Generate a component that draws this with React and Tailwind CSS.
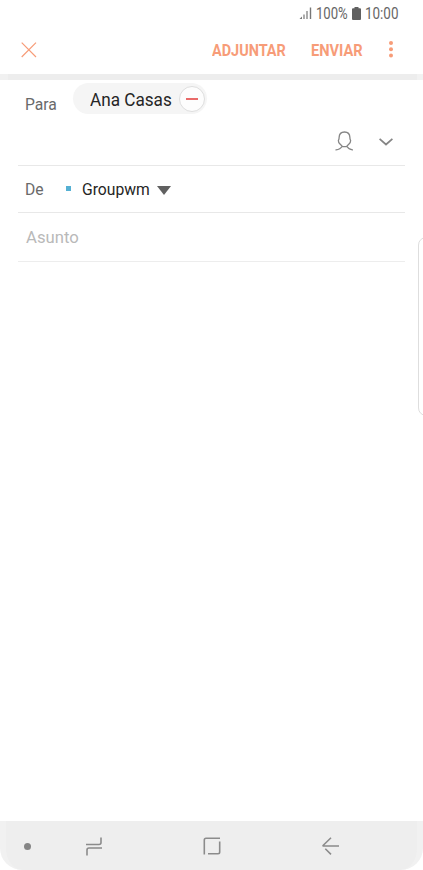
function StatusBar() {
  return (
    <div className="flex h-7 shrink-0 items-center pl-[299px] text-[#666]">
      <svg width="13" height="12" viewBox="0 0 13 12" className="mt-[-2px] shrink-0" fill="#777">
        <path d="M0.500 12 L3 9.500 V12Z" />
        <rect x="4.400" y="7.500" width="1.200" height="4.500" />
        <rect x="7.400" y="4" width="1.200" height="8" />
        <rect x="10.800" y="0.500" width="1.400" height="11.500" />
      </svg>
      <span className="ml-[4px] w-8 shrink-0 whitespace-nowrap text-base leading-7">
        <span className="inline-block origin-left scale-x-[0.82]">100%</span>
      </span>
      <svg width="9" height="13" viewBox="0 0 9 13" className="ml-[4px] mt-[-2px] shrink-0" fill="#606060">
        <path d="M2.500 0h4v1.200H8q1 0 1 1V12q0 1-1 1H1q-1 0-1-1V2.200q0-1 1-1h1.500z" />
      </svg>
      <span className="ml-[4px] whitespace-nowrap text-base leading-7">
        <span className="inline-block origin-left scale-x-[0.84]">10:00</span>
      </span>
    </div>
  );
}

function Toolbar() {
  return (
    <div className="flex h-[46px] shrink-0 items-center pl-[21px] text-[#f79c78]">
      <svg width="16" height="16" viewBox="0 0 16 16" className="mt-[-3px] shrink-0" fill="none" stroke="currentColor" strokeWidth="1.200">
        <path d="M0.700 0.700 15 15M15 0.700 0.700 15" />
      </svg>
      <button className="ml-[175px] mt-[1px] w-[99px] shrink-0 whitespace-nowrap text-left text-[16.500px] font-bold">
        <span className="inline-block origin-left scale-x-[0.875]">ADJUNTAR</span>
      </button>
      <button className="mt-[1px] w-[77px] shrink-0 whitespace-nowrap text-left text-[16.500px] font-bold">
        <span className="inline-block origin-left scale-x-[0.885]">ENVIAR</span>
      </button>
      <svg width="6" height="18" viewBox="0 0 6 18" className="mt-[-4px] shrink-0" fill="currentColor">
        <circle cx="3" cy="3" r="2" />
        <circle cx="3" cy="9.200" r="2" />
        <circle cx="3" cy="15.500" r="2" />
      </svg>
    </div>
  );
}

function Recipients() {
  return (
    <div className="mx-[18px] h-[86px] shrink-0 border-b border-[#e8e8e8]">
      <div className="flex pt-[3px]">
        <span className="ml-[7px] mt-[10px] w-12 shrink-0 text-[15.700px] leading-6 text-[#6a6a6a]">Para</span>
        <div className="flex h-[31px] w-[134px] items-center rounded-full bg-[#f5f5f5] pl-[17px]">
          <span className="mt-[3px] w-[89px] shrink-0 whitespace-nowrap text-[17.500px] leading-[31px] text-[#252525]">
            <span className="inline-block origin-left scale-x-[0.98]">Ana Casas</span>
          </span>
          <span className="flex size-[26px] shrink-0 items-center justify-center rounded-full border border-[#dedede] bg-[#fdfdfd]">
            <span className="h-0.5 w-3 bg-[#e96a69]" />
          </span>
        </div>
      </div>
      <div className="flex items-center pl-[317px] pt-[14px]">
        <svg width="18" height="20" viewBox="0 0 18 20" className="shrink-0" fill="none" stroke="#858585" strokeWidth="1.300" strokeLinecap="round">
          <path d="M9.500 1C6 1 4.200 3.300 4.100 6.500Q4.200 7.800 3.400 9.500Q3.300 11.500 5 13L7.200 15.300Q9.500 16 11.800 15.300L14 13Q15.700 11.500 15.600 9.500Q14.800 7.800 14.900 6.500C14.800 3.300 13 1 9.500 1M1 18.900Q5.300 18.600 7.200 15.300M17.500 18.900Q13.700 18.600 11.800 15.300" />
        </svg>
        <svg width="14" height="8" viewBox="0 0 14 8" className="ml-[25.500px] mt-[1px] shrink-0" fill="none" stroke="#858585" strokeWidth="1.700">
          <path d="M0.600 0.800 7 6.500 13.400 0.800" />
        </svg>
      </div>
    </div>
  );
}

export default function App() {
  return (
    <div className="relative flex h-[870px] w-[423px] flex-col overflow-hidden bg-white font-['Roboto',sans-serif]">
      <StatusBar />
      <Toolbar />
      <div className="flex h-1.5 shrink-0 bg-[#ededed]">
        <div className="w-2 bg-[#f1f1f1]" />
        <div className="ml-auto w-1.5 bg-[#f2f2f2]" />
      </div>
      <Recipients />
      <div className="mx-[18px] flex h-[47px] shrink-0 items-center border-b border-[#e8e8e8] pl-[7px]">
        <span className="mt-[2px] w-[41px] text-[15.700px] text-[#6a6a6a]">De</span>
        <span className="mt-[-1px] size-[5px] bg-[#55b0d3]" />
        <span className="ml-[11px] mt-[2px] w-[75px] whitespace-nowrap text-[15.700px] text-[#252525]">Groupwm</span>
        <svg width="14" height="9" viewBox="0 0 14 9" className="mt-[2px]" fill="#606060">
          <path d="M0 0H14L7 9Z" />
        </svg>
      </div>
      <div className="mx-[18px] flex h-[49px] shrink-0 items-center border-b border-[#ededed] pl-2">
        <span className="mt-[1px] text-[16.700px] text-[#b9b9b9]">Asunto</span>
      </div>
      <div className="absolute left-[418px] top-[237px] h-[179px] w-5 rounded-lg border border-[#dedede] bg-white" />
      <div className="mt-auto flex h-[49px] shrink-0 items-center rounded-b-[22px] border-x-[6px] border-[#f1f1f1] bg-[#eee] pl-[18px]">
        <span className="mt-[1px] size-[7px] shrink-0 rounded-full bg-[#858585]" />
        <svg width="18" height="20" viewBox="0 0 18 20" className="ml-[54px] shrink-0" fill="none" stroke="#8b8b8b" strokeWidth="1.600">
          <path d="M1 8.500H14Q16 8.500 16 6.500V1.500M17 12H4Q2 12 2 14V19.500" />
        </svg>
        <svg width="18" height="18" viewBox="0 0 18 18" className="ml-[100px] shrink-0" fill="none" stroke="#8b8b8b" strokeWidth="1.600">
          <path d="M1.300 17.500V3Q1.300 1.300 3 1.300H17M16.700 4.500V15Q16.700 16.700 15 16.700H5" />
        </svg>
        <svg width="18" height="18" viewBox="0 0 18 18" className="ml-[101px] shrink-0" fill="none" stroke="#8b8b8b" strokeWidth="1.600">
          <path d="M9 0.700 1.300 8.300Q0.700 9 1.300 9H17M3.300 11.800 9 17.400" />
        </svg>
      </div>
    </div>
  );
}
